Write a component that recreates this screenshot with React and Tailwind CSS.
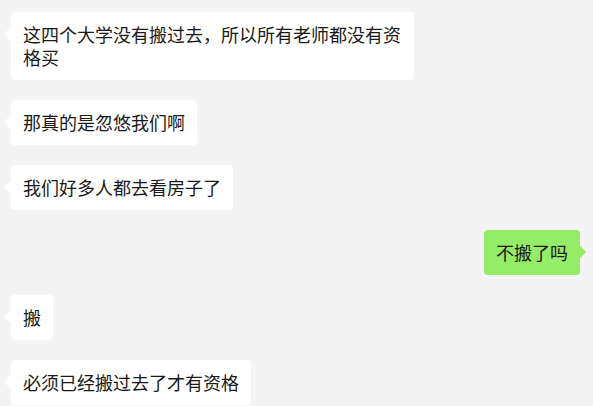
import React from 'react';

const messages = [
  { side: 'left', text: '这四个大学没有搬过去，所以所有老师都没有资格买' },
  { side: 'left', text: '那真的是忽悠我们啊' },
  { side: 'left', text: '我们好多人都去看房子了' },
  { side: 'right', text: '不搬了吗' },
  { side: 'left', text: '搬' },
  { side: 'left', text: '必须已经搬过去了才有资格' },
];

function Bubble({ side, text }) {
  const mine = side === 'right';
  return (
    <div className={mine ? 'flex justify-end pr-[13px]' : 'flex justify-start pl-[11px]'}>
      <div
        className={
          'relative max-w-[403px] rounded-[4px] px-[12px] py-[11px] text-[18px] leading-[23px] text-[#191919] ' +
          (mine ? 'bg-[#95ec69]' : 'bg-white')
        }
      >
        <span
          className={
            'absolute top-[17px] w-[10px] h-[10px] rotate-45 rounded-[1px] ' +
            (mine ? 'right-[-4px] bg-[#95ec69]' : 'left-[-5px] bg-white')
          }
        />
        <span className="relative">{text}</span>
      </div>
    </div>
  );
}

export default function App() {
  return (
    <div
      className="w-[593px] h-[406px] overflow-hidden bg-[#f4f4f4] pt-[12px] flex flex-col gap-[20px]"
      style={{ fontFamily: '"Microsoft YaHei", "Noto Sans CJK SC", sans-serif' }}
    >
      {messages.map((m, i) => (
        <Bubble key={i} side={m.side} text={m.text} />
      ))}
    </div>
  );
}
